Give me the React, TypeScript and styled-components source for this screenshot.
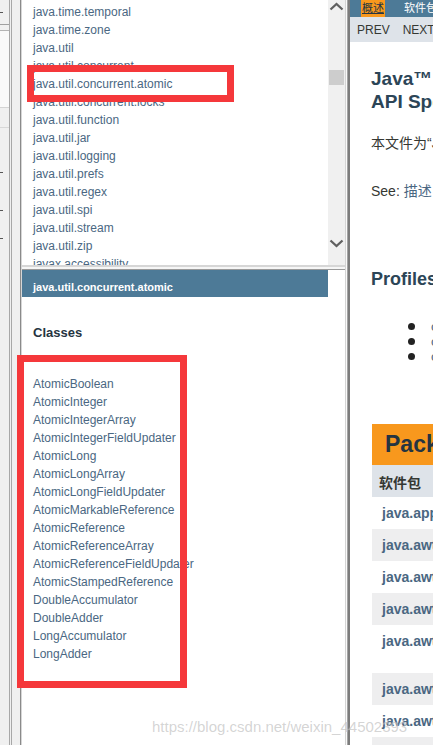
import React from "react";
import styled, { createGlobalStyle } from "styled-components";

const Global = createGlobalStyle`
  html, body { margin: 0; padding: 0; background: #fff; overflow: hidden; }
`;

const SANS = `"Liberation Sans", Arial, "Noto Sans CJK SC", sans-serif`;

const Page = styled.div`
  position: relative;
  display: flex;
  width: 433px;
  height: 745px;
  overflow: hidden;
  background: #fff;
  font-family: ${SANS};
`;

/* ---------- far-left strip (another window) ---------- */
const SideStrip = styled.div`
  width: 9px;
  flex: none;
  background: #f0f0f0;
  display: flex;
  flex-direction: column;
`;
const SideHead = styled.div`
  height: 24px;
  border-bottom: 1px solid #a0a0a0;
  display: flex;
  align-items: center;
`;
const SideField = styled.div`
  margin-top: 5px;
  height: 76px;
  background: #fafafa;
  border-top: 1px solid #b4b4b4;
  border-bottom: 1px solid #d4d4d4;
`;
const SideRule = styled.div`
  margin-top: 19px;
  height: 1px;
  background: #d8d8d8;
`;
const SideTick = styled.div<{ $gap: number }>`
  margin-top: ${(p) => p.$gap}px;
  width: 3px;
  height: 1px;
  flex: none;
  background: #555;
`;

const FrameRail = styled.div`
  width: 13px;
  flex: none;
  background: linear-gradient(
    to right,
    #a8a8a8 0 1px,
    #f0f0f0 1px 2px,
    #a8a8a8 2px 3px,
    #f0f0f0 3px 11px,
    #8a8a8a 11px 12px,
    #d6d6d6 12px 13px
  );
`;

/* ---------- left frames ---------- */
const NavColumn = styled.div`
  width: 323px;
  flex: none;
  display: flex;
  flex-direction: column;
`;
const PackageFrame = styled.div`
  height: 265px;
  flex: none;
  display: flex;
`;
const PackageList = styled.div`
  flex: 1;
  overflow: hidden;
  padding: 3px 0 0 11px;
`;
const ListLink = styled.div`
  height: 18px;
  line-height: 18px;
  font-size: 12px;
  color: #4a6782;
  white-space: nowrap;
`;
const Scrollbar = styled.div`
  width: 17px;
  flex: none;
  background: #f0f0f0;
  display: flex;
  flex-direction: column;
`;
const ArrowBtn = styled.div<{ $bottom?: boolean }>`
  height: 14px;
  flex: none;
  display: flex;
  align-items: center;
  justify-content: center;
  margin-bottom: ${(p) => (p.$bottom ? "15px" : "0")};
`;
const Thumb = styled.div`
  margin: 56px 1px 0;
  height: 15px;
  background: #cdcdcd;
`;
const Spacer = styled.div`
  flex: 1;
`;
const HSplit = styled.div`
  height: 5px;
  flex: none;
  background: linear-gradient(
    to bottom,
    #d6d6d6 0 2px,
    #f6f6f6 2px 4px,
    #9a9a9a 4px 5px
  );
`;
const ClassFrame = styled.div`
  flex: 1;
  padding-right: 17px;
  display: flex;
  flex-direction: column;
`;
const ClassHeader = styled.div`
  height: 27px;
  flex: none;
  box-sizing: border-box;
  background: #4d7a97;
  color: #fff;
  font-weight: bold;
  font-size: 11px;
  line-height: 14px;
  padding: 10px 0 0 11px;
  white-space: nowrap;
`;
const ClassesTitle = styled.div`
  margin: 28px 0 0 11px;
  font-size: 13px;
  line-height: 16px;
  font-weight: bold;
  color: #253441;
`;
const ClassList = styled.div`
  margin: 34px 0 0 11px;
`;

const VSplit = styled.div`
  width: 5px;
  flex: none;
  background: linear-gradient(
    to right,
    #d4d4d4 0 1px,
    #fafafa 1px 2px,
    #a4a4a4 2px 3px,
    #7c7c7c 3px 5px
  );
`;

/* ---------- right frame ---------- */
const RightFrame = styled.div`
  flex: 1;
  min-width: 0;
  display: flex;
  flex-direction: column;
  overflow: hidden;
  color: #353833;
`;
const TopNav = styled.div`
  height: 17px;
  flex: none;
  background: #4d7a97;
  display: flex;
  padding-left: 11px;
  white-space: nowrap;
  font-size: 11px;
  line-height: 17px;
`;
const NavCurrent = styled.span`
  background: #f8981d;
  color: #253441;
  padding: 0 1px;
  text-decoration: underline;
`;
const NavItem = styled.span`
  margin-left: 19px;
  color: #fff;
`;
const SubNav = styled.div`
  height: 25px;
  flex: none;
  background: #dee3e9;
  display: flex;
  gap: 13px;
  padding-left: 7px;
  font-size: 12px;
  line-height: 26px;
  color: #353833;
  white-space: nowrap;
`;
const Content = styled.div`
  padding-left: 21px;
  white-space: nowrap;
`;
const Title = styled.div`
  margin-top: 25px;
  font-size: 19px;
  line-height: 23px;
  font-weight: bold;
  color: #2c4557;
`;
const Para = styled.div<{ $gap: number }>`
  margin-top: ${(p) => p.$gap}px;
  font-size: 14px;
  line-height: 18px;
`;
const Link = styled.span`
  color: #4a6782;
`;
const SubTitle = styled.div`
  margin-top: 68px;
  font-size: 18px;
  line-height: 22px;
  font-weight: bold;
  color: #2c4557;
`;
const Bullets = styled.ul`
  list-style: none;
  margin: 29px 0 0;
  padding: 0;
`;
const Bullet = styled.li`
  position: relative;
  height: 15px;
  line-height: 15px;
  font-size: 13px;
  padding-left: 60px;
  color: #4a6782;
  &::before {
    content: "";
    position: absolute;
    left: 37px;
    top: 4px;
    width: 7px;
    height: 7px;
    border-radius: 50%;
    background: #222;
  }
`;
const Table = styled.div`
  margin: 60px 0 0 1px;
`;
const Caption = styled.div`
  height: 41px;
  background: #f8981d;
  padding-left: 13px;
  font-size: 23px;
  line-height: 41px;
  font-weight: bold;
  color: #253441;
`;
const HeadRow = styled.div`
  height: 32px;
  box-sizing: border-box;
  padding: 2px 0 0 7px;
  background: #dee3e9;
  font-size: 14px;
  line-height: 32px;
  font-weight: bold;
  color: #353833;
`;
const Row = styled.div<{ $alt: boolean; $tall?: boolean }>`
  height: ${(p) => (p.$tall ? 48 : 32)}px;
  box-sizing: border-box;
  padding: ${(p) => (p.$tall ? "7px" : "0")} 0 0 10px;
  background: ${(p) => (p.$alt ? "#eeeeef" : "#ffffff")};
  font-size: 14px;
  line-height: ${(p) => (p.$tall ? "18px" : "32px")};
  font-weight: bold;
  color: #4a6782;
`;

/* ---------- overlays ---------- */
const Mark = styled.div<{ $x: number; $y: number; $w: number; $h: number }>`
  position: absolute;
  left: ${(p) => p.$x}px;
  top: ${(p) => p.$y}px;
  width: ${(p) => p.$w}px;
  height: ${(p) => p.$h}px;
  box-sizing: border-box;
  border: 7px solid #f5383b;
  pointer-events: none;
`;
const Watermark = styled.div`
  position: absolute;
  left: 152px;
  top: 718px;
  font-size: 15px;
  line-height: 18px;
  color: rgba(160, 160, 160, 0.45);
  text-shadow: 0 0 1px rgba(255, 255, 255, 0.6);
  white-space: nowrap;
  pointer-events: none;
`;

const packages = [
  "java.time.temporal",
  "java.time.zone",
  "java.util",
  "java.util.concurrent",
  "java.util.concurrent.atomic",
  "java.util.concurrent.locks",
  "java.util.function",
  "java.util.jar",
  "java.util.logging",
  "java.util.prefs",
  "java.util.regex",
  "java.util.spi",
  "java.util.stream",
  "java.util.zip",
  "javax.accessibility",
];

const classes = [
  "AtomicBoolean",
  "AtomicInteger",
  "AtomicIntegerArray",
  "AtomicIntegerFieldUpdater",
  "AtomicLong",
  "AtomicLongArray",
  "AtomicLongFieldUpdater",
  "AtomicMarkableReference",
  "AtomicReference",
  "AtomicReferenceArray",
  "AtomicReferenceFieldUpdater",
  "AtomicStampedReference",
  "DoubleAccumulator",
  "DoubleAdder",
  "LongAccumulator",
  "LongAdder",
];

const tableRows = [
  "java.applet",
  "java.awt",
  "java.awt.color",
  "java.awt.datatransfer",
  "java.awt.dnd",
  "java.awt.event",
  "java.awt.font",
  "java.awt.geom",
];

const Chevron = ({ down }: { down?: boolean }) => (
  <svg width="15" height="10" viewBox="0 0 15 10">
    <polyline
      points={down ? "1.5,2.5 7.5,8 13.5,2.5" : "1.5,7.5 7.5,2 13.5,7.5"}
      fill="none"
      stroke="#5f5f5f"
      strokeWidth="2.3"
    />
  </svg>
);

export default function App() {
  return (
    <Page>
      <Global />
      <SideStrip>
        <SideHead>
          <SideTick $gap={0} />
        </SideHead>
        <SideField />
        <SideRule />
        <SideTick $gap={44} />
        <SideTick $gap={37} />
        <SideTick $gap={27} />
      </SideStrip>
      <FrameRail />
      <NavColumn>
        <PackageFrame>
          <PackageList>
            {packages.map((p) => (
              <ListLink key={p}>{p}</ListLink>
            ))}
          </PackageList>
          <Scrollbar>
            <ArrowBtn>
              <Chevron />
            </ArrowBtn>
            <Thumb />
            <Spacer />
            <ArrowBtn $bottom>
              <Chevron down />
            </ArrowBtn>
          </Scrollbar>
        </PackageFrame>
        <HSplit />
        <ClassFrame>
          <ClassHeader>java.util.concurrent.atomic</ClassHeader>
          <ClassesTitle>Classes</ClassesTitle>
          <ClassList>
            {classes.map((c) => (
              <ListLink key={c}>{c}</ListLink>
            ))}
          </ClassList>
        </ClassFrame>
      </NavColumn>
      <VSplit />
      <RightFrame>
        <TopNav>
          <NavCurrent>概述</NavCurrent>
          <NavItem>软件包</NavItem>
        </TopNav>
        <SubNav>
          <span>PREV</span>
          <span>NEXT</span>
        </SubNav>
        <Content>
          <Title>
            Java™ Platform, Standard Edition 8
            <br />
            API Specification
          </Title>
          <Para $gap={21}>本文件为“Java™ Platform, Standard Edition 8”的 API 规范。</Para>
          <Para $gap={30}>
            See: <Link>描述</Link>
          </Para>
          <SubTitle>Profiles</SubTitle>
          <Bullets>
            <Bullet>compact1</Bullet>
            <Bullet>compact2</Bullet>
            <Bullet>compact3</Bullet>
          </Bullets>
          <Table>
            <Caption>Packages</Caption>
            <HeadRow>软件包</HeadRow>
            {tableRows.map((r, i) => (
              <Row key={r} $alt={i % 2 === 1} $tall={i === 4}>
                {r}
              </Row>
            ))}
          </Table>
        </Content>
      </RightFrame>
      <Mark $x={27} $y={65} $w={207} $h={37} />
      <Mark $x={17} $y={355} $w={170} $h={333} />
      <Watermark>https://blog.csdn.net/weixin_44502393</Watermark>
    </Page>
  );
}
